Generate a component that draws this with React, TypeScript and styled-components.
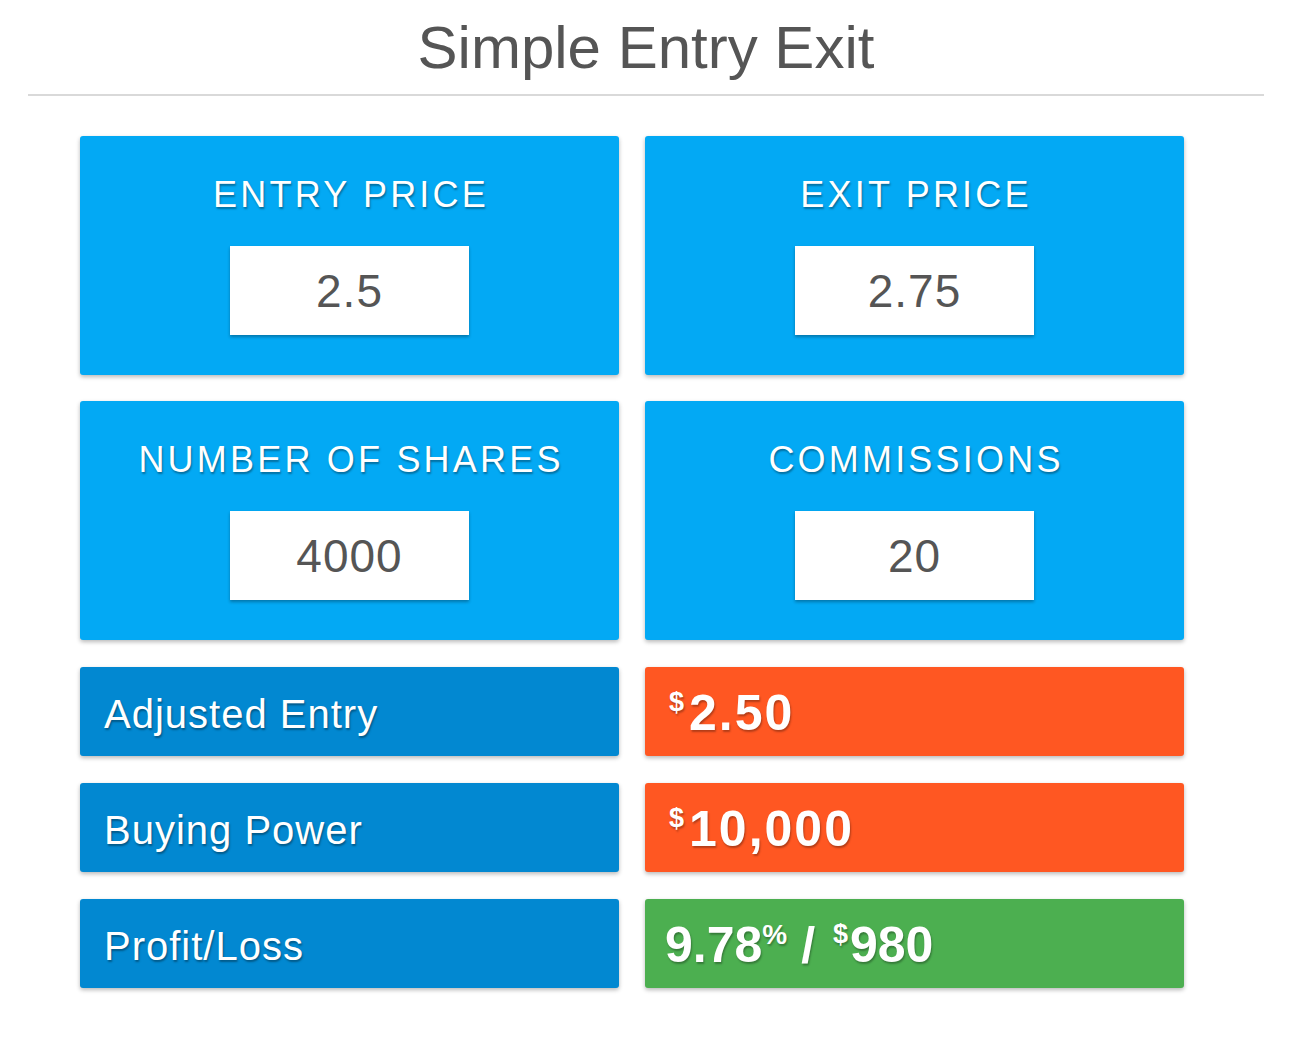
import React from "react";
import styled, { createGlobalStyle } from "styled-components";

const GlobalStyle = createGlobalStyle`
  html, body {
    margin: 0;
    padding: 0;
    background: #ffffff;
    font-family: "Liberation Sans", Arial, sans-serif;
  }
`;

const Page = styled.div`
  width: 1300px;
  padding-bottom: 40px;
`;

const Header = styled.header`
  margin: 0 36px 0 28px;
  padding-top: 12px;
  border-bottom: 2px solid #d9d9d9;
`;

const Title = styled.h1`
  margin: 0 0 10px;
  font-family: "Liberation Sans", Arial, sans-serif;
  font-weight: 400;
  font-size: 60px;
  line-height: 72px;
  color: #555555;
  text-align: center;
`;

const Main = styled.main`
  margin: 40px 0 0 80px;
  width: 1104px;
  display: flex;
  flex-direction: column;
  gap: 27px;
`;

const InputGrid = styled.section`
  display: grid;
  grid-template-columns: 539px 539px;
  gap: 26px;
`;

const ResultGrid = styled.section`
  display: grid;
  grid-template-columns: 539px 539px;
  column-gap: 26px;
  row-gap: 27px;
`;

const Card = styled.div`
  background: #03a9f4;
  border-radius: 3px;
  box-shadow: 0 2px 4px rgba(0, 0, 0, 0.28);
  height: 239px;
  box-sizing: border-box;
  padding-top: 41px;
  display: flex;
  flex-direction: column;
  align-items: center;
`;

const CardLabel = styled.label`
  display: block;
  font-size: 36px;
  line-height: 36px;
  letter-spacing: 3.2px;
  color: #ffffff;
  text-transform: uppercase;
  text-shadow: 1px 2px 2px rgba(0, 0, 0, 0.35);
  margin-bottom: 33px;
  padding-left: 3px;
`;

const ValueInput = styled.input`
  width: 239px;
  height: 89px;
  box-sizing: border-box;
  border: none;
  outline: none;
  background: #ffffff;
  box-shadow: 0 2px 3px rgba(0, 0, 0, 0.3);
  font-family: "Liberation Sans", Arial, sans-serif;
  font-size: 46px;
  letter-spacing: 1px;
  color: #555555;
  text-align: center;
  padding: 0;
`;

const ResultLabel = styled.div`
  background: #0288d1;
  border-radius: 3px;
  box-shadow: 0 2px 4px rgba(0, 0, 0, 0.28);
  height: 89px;
  box-sizing: border-box;
  padding: 6px 24px 0;
  display: flex;
  align-items: center;
  font-size: 40px;
  letter-spacing: 1px;
  color: #ffffff;
  text-shadow: 1px 2px 2px rgba(0, 0, 0, 0.35);
`;

const ResultValue = styled.div<{ $tone: "orange" | "green" }>`
  background: ${(p) => (p.$tone === "green" ? "#4caf50" : "#ff5722")};
  border-radius: 3px;
  box-shadow: 0 2px 4px rgba(0, 0, 0, 0.28);
  height: 89px;
  box-sizing: border-box;
  padding: 2px 20px 0;
  display: flex;
  align-items: center;
`;

const ValueText = styled.span<{ $spacing?: number }>`
  font-size: 50px;
  font-weight: 700;
  letter-spacing: ${(p) => p.$spacing ?? 0}px;
  color: #ffffff;
  text-shadow: 1px 2px 2px rgba(0, 0, 0, 0.3);
  white-space: pre;
`;

const Sup = styled.span<{ $after?: number }>`
  font-size: 27px;
  letter-spacing: 0;
  vertical-align: 19px;
  margin: 0 ${(p) => p.$after ?? 5}px 0 4px;
`;

const Percent = styled.span`
  font-size: 28px;
  vertical-align: 18px;
`;

const inputs = [
  { label: "Entry Price", value: "2.5" },
  { label: "Exit Price", value: "2.75" },
  { label: "Number of Shares", value: "4000" },
  { label: "Commissions", value: "20" },
];

export default function App() {
  return (
    <Page>
      <GlobalStyle />
      <Header>
        <Title>Simple Entry Exit</Title>
      </Header>
      <Main>
        <InputGrid>
          {inputs.map((i) => (
            <Card key={i.label}>
              <CardLabel>{i.label}</CardLabel>
              <ValueInput defaultValue={i.value} />
            </Card>
          ))}
        </InputGrid>
        <ResultGrid>
          <ResultLabel>Adjusted Entry</ResultLabel>
          <ResultValue $tone="orange">
            <ValueText $spacing={2}>
              <Sup>$</Sup>2.50
            </ValueText>
          </ResultValue>
          <ResultLabel>Buying Power</ResultLabel>
          <ResultValue $tone="orange">
            <ValueText $spacing={2}>
              <Sup>$</Sup>10,000
            </ValueText>
          </ResultValue>
          <ResultLabel>Profit/Loss</ResultLabel>
          <ResultValue $tone="green">
            <ValueText>
              9.78<Percent>%</Percent>
              {" / "}
              <Sup $after={2}>$</Sup>980
            </ValueText>
          </ResultValue>
        </ResultGrid>
      </Main>
    </Page>
  );
}
